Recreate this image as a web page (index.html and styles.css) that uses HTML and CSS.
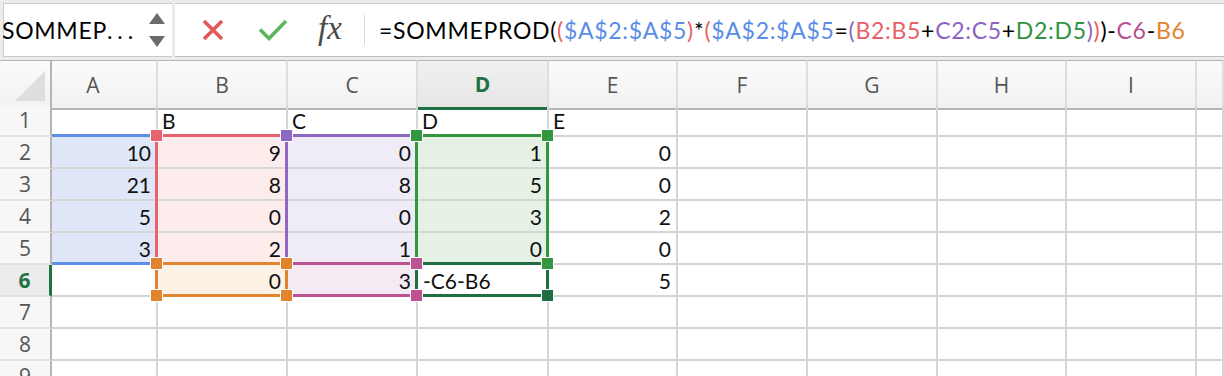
FILE: index.html
```html
<!DOCTYPE html>
<html lang="fr">

<head>
  <meta charset="UTF-8">
  <title>Classeur</title>
  <link rel="stylesheet" href="styles.css">
</head>

<body>
  <div class="topbar">
    <div class="namebox">
      <span class="name">SOMMEP<span class="dots">...</span></span>
      <svg class="stepper" width="16" height="34" viewBox="0 0 16 34">
        <path d="M8 0 L16 11 H0 Z M0 23 H16 L8 34 Z" fill="#6b6b6b"/>
      </svg>
    </div>
    <div class="bar">
      <div class="tools">
        <svg class="cancel" width="22" height="22" viewBox="0 0 22 22">
          <path d="M2 2 L20 20 M20 2 L2 20" stroke="#e0585b" stroke-width="3.6" fill="none"/>
        </svg>
        <svg class="enter" width="30" height="22" viewBox="0 0 30 22">
          <path d="M2 10.5 L11 19.5 L28 2" stroke="#5fb65f" stroke-width="3.6" fill="none"/>
        </svg>
        <span class="fx">fx</span>
      </div>
      <div class="formula">=SOMMEPROD(<span class="f-red">(</span><span class="f-blue">$A$2:$A$5</span><span class="f-red">)</span>*<span class="f-red">(</span><span class="f-blue">$A$2:$A$5</span>=<span class="f-purple">(</span><span class="f-red">B2:B5</span>+<span class="f-purple">C2:C5</span>+<span class="f-green">D2:D5</span><span class="f-purple">)</span><span class="f-red">)</span>)-<span class="f-magenta">C6</span>-<span class="f-orange">B6</span></div>
    </div>
  </div>

  <div class="sheet">
    <div class="row head">
      <div class="corner">
        <svg width="52" height="44" viewBox="0 0 52 44"><path d="M15 40 L45 10 L45 40 Z" fill="#dedede"/></svg>
      </div>
      <div class="h first">A</div>
      <div class="h">B</div>
      <div class="h">C</div>
      <div class="h on">D</div>
      <div class="h">E</div>
      <div class="h">F</div>
      <div class="h">G</div>
      <div class="h">H</div>
      <div class="h">I</div>
      <div class="h"></div>
    </div>
    <div class="row">
      <div class="rh">1</div>
      <div class="c"></div>
      <div class="c t">B</div>
      <div class="c t">C</div>
      <div class="c t">D</div>
      <div class="c t">E</div>
      <div class="c"></div><div class="c"></div><div class="c"></div><div class="c"></div><div class="c"></div>
    </div>
    <div class="row">
      <div class="rh">2</div>
      <div class="c fill-a">10</div>
      <div class="c fill-b">9</div>
      <div class="c fill-c">0</div>
      <div class="c fill-d">1</div>
      <div class="c">0</div>
      <div class="c"></div><div class="c"></div><div class="c"></div><div class="c"></div><div class="c"></div>
    </div>
    <div class="row">
      <div class="rh">3</div>
      <div class="c fill-a">21</div>
      <div class="c fill-b">8</div>
      <div class="c fill-c">8</div>
      <div class="c fill-d">5</div>
      <div class="c">0</div>
      <div class="c"></div><div class="c"></div><div class="c"></div><div class="c"></div><div class="c"></div>
    </div>
    <div class="row">
      <div class="rh">4</div>
      <div class="c fill-a">5</div>
      <div class="c fill-b">0</div>
      <div class="c fill-c">0</div>
      <div class="c fill-d">3</div>
      <div class="c">2</div>
      <div class="c"></div><div class="c"></div><div class="c"></div><div class="c"></div><div class="c"></div>
    </div>
    <div class="row">
      <div class="rh">5</div>
      <div class="c fill-a">3</div>
      <div class="c fill-b">2</div>
      <div class="c fill-c">1</div>
      <div class="c fill-d">0</div>
      <div class="c">0</div>
      <div class="c"></div><div class="c"></div><div class="c"></div><div class="c"></div><div class="c"></div>
    </div>
    <div class="row">
      <div class="rh on">6</div>
      <div class="c"></div>
      <div class="c fill-o">0</div>
      <div class="c fill-m">3</div>
      <div class="c t edit">-C6-B6</div>
      <div class="c">5</div>
      <div class="c"></div><div class="c"></div><div class="c"></div><div class="c"></div><div class="c"></div>
    </div>
    <div class="row">
      <div class="rh">7</div>
      <div class="c"></div><div class="c"></div><div class="c"></div><div class="c"></div><div class="c"></div>
      <div class="c"></div><div class="c"></div><div class="c"></div><div class="c"></div><div class="c"></div>
    </div>
    <div class="row">
      <div class="rh">8</div>
      <div class="c"></div><div class="c"></div><div class="c"></div><div class="c"></div><div class="c"></div>
      <div class="c"></div><div class="c"></div><div class="c"></div><div class="c"></div><div class="c"></div>
    </div>
    <div class="row">
      <div class="rh">9</div>
      <div class="c"></div><div class="c"></div><div class="c"></div><div class="c"></div><div class="c"></div>
      <div class="c"></div><div class="c"></div><div class="c"></div><div class="c"></div><div class="c"></div>
    </div>

    <!-- plages de la formule -->
    <div class="range r-a"></div>
    <div class="range r-b"></div>
    <div class="range r-c"></div>
    <div class="range r-d"></div>
    <div class="range r-c6"></div>
    <div class="range r-b6"></div>
    <div class="range r-active"></div>

    <!-- poignées -->
    <div class="sq red x1 y1"></div>
    <div class="sq purple x2 y1"></div>
    <div class="sq green x3 y1"></div>
    <div class="sq green x4 y1"></div>
    <div class="sq green x4 y2"></div>
    <div class="sq magenta x3 y2"></div>
    <div class="sq magenta x3 y3"></div>
    <div class="sq orange x1 y2"></div>
    <div class="sq orange x2 y2"></div>
    <div class="sq orange x1 y3"></div>
    <div class="sq orange x2 y3"></div>
    <div class="sq dark x4 y3"></div>
  </div>
</body>

</html>
```

FILE: styles.css
```css
* {
  margin: 0;
  padding: 0;
  box-sizing: border-box;
}

body {
  width: 1224px;
  height: 376px;
  overflow: hidden;
  background: #ececec;
  font-family: Lato, "Open Sans", sans-serif;
  color: #111;
}

/* barre de formule */
.topbar {
  display: flex;
  gap: 3px;
  height: 57px;
  padding: 3px 0 0 3px;
}

.namebox {
  width: 169px;
  background: #fff;
  border: 1px solid #cbcbcb;
  border-right: 0;
  display: flex;
  align-items: center;
  justify-content: space-between;
  padding-right: 7px;
}

.name {
  font-size: 23px;
  letter-spacing: 0.7px;
  margin-left: -2px;
  white-space: nowrap;
  color: #000;
}

.dots {
  letter-spacing: 5px;
}

.bar {
  flex: 1;
  background: #fff;
  border-top: 1px solid #cbcbcb;
  border-bottom: 1px solid #bdbdbd;
  display: flex;
  align-items: center;
}

.tools {
  width: 190px;
  height: 30px;
  border-right: 1px solid #d9d9d9;
  display: flex;
  align-items: center;
  padding-left: 27px;
}

.enter {
  margin-left: 34px;
}

.fx {
  margin-left: 30px;
  font-family: "Liberation Serif", serif;
  font-style: italic;
  font-size: 33px;
  color: #4a4a4a;
  line-height: 1;
  margin-top: -4px;
}

.formula {
  margin-left: 14px;
  font-size: 23px;
  letter-spacing: 0.7px;
  white-space: nowrap;
  color: #000;
}

.f-red { color: #e85f67; }
.f-blue { color: #5b8ce6; }
.f-purple { color: #8c63c4; }
.f-green { color: #2f9441; }
.f-magenta { color: #b84f90; }
.f-orange { color: #e4832f; }

/* feuille */
.sheet {
  position: relative;
  margin-top: 3px;
  background: #fff;
}

.row {
  display: grid;
  grid-template-columns: 52px 106px 130px 130px 131px 129px 130px 130px 129px 130px 1fr;
  height: 32px;
}

.row.head {
  height: 45px;
}

.corner,
.h {
  border-top: 1px solid #b3b3b3;
  border-bottom: 2px solid #b5b5b5;
  background: linear-gradient(#fbfbfb, #f1f1f1);
}

.corner {
  border-right: 2px solid #b5b5b5;
}

.h {
  border-right: 2px solid #dedede;
  display: flex;
  align-items: center;
  justify-content: center;
  font-family: "Open Sans", sans-serif;
  font-size: 21px;
  color: #555;
}

.h.first {
  padding-right: 22px;
}

.h.on {
  background: linear-gradient(#f1f1f1, #e6e6e6);
  border-bottom: 3px solid #1f7244;
  color: #1f7244;
  font-weight: bold;
}

.rh {
  background: #f7f7f7;
  border-right: 2px solid #b5b5b5;
  border-bottom: 2px solid #e2e2e2;
  display: flex;
  align-items: center;
  justify-content: center;
  font-family: "Open Sans", sans-serif;
  font-size: 21px;
  color: #555;
}

.rh.on {
  background: #ececec;
  border-right: 3px solid #1f7244;
  color: #1f7244;
  font-weight: bold;
}

.c {
  border-right: 2px solid #d6d6d6;
  border-bottom: 2px solid #d6d6d6;
  display: flex;
  align-items: flex-end;
  justify-content: flex-end;
  padding: 0 5px 2px 4px;
  font-size: 21px;
  line-height: 24px;
}

.c.t {
  justify-content: flex-start;
}

.c.edit {
  padding-left: 5px;
}

.fill-a { background: #dfe6f7; }
.fill-b { background: #fcecec; }
.fill-c { background: #efebf7; }
.fill-d { background: #e6f1e5; }
.fill-o { background: #fcf1e5; }
.fill-m { background: #f5e9f3; }

/* cadres des références */
.range {
  position: absolute;
  border: 3px solid;
  top: 74px;
  height: 131px;
}

.r-a { left: 52px; width: 106px; border-left: 0; border-color: #5f8fe5; }
.r-b { left: 155px; width: 133px; border-color: #e8636b; }
.r-c { left: 285px; width: 133px; border-color: #8f67c4; }
.r-d { left: 415px; width: 134px; border-color: #34963f; }

.r-c6,
.r-b6,
.r-active {
  top: 202px;
  height: 35px;
}

.r-c6 { left: 285px; width: 133px; border-color: #bd5293; }
.r-b6 { left: 155px; width: 133px; border-color: #e2832f; }
.r-active { left: 415px; width: 134px; border-color: #1f6e41; }

.sq {
  position: absolute;
  width: 13px;
  height: 13px;
  border: 1px solid #fff;
}

.x1 { left: 150px; }
.x2 { left: 280px; }
.x3 { left: 410px; }
.x4 { left: 541px; }
.y1 { top: 69px; }
.y2 { top: 197px; }
.y3 { top: 229px; }

.sq.red { background: #e8636b; }
.sq.purple { background: #8f67c4; }
.sq.green { background: #34963f; }
.sq.magenta { background: #bd5293; }
.sq.orange { background: #e2832f; }
.sq.dark { background: #1f6e41; }
```
